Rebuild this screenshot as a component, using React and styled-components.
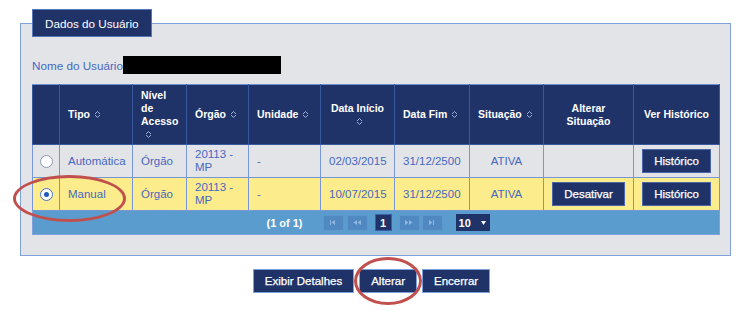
import React from "react";
import styled, { createGlobalStyle } from "styled-components";

const GlobalStyle = createGlobalStyle`
  body {
    margin: 0;
    background: #fff;
    font-family: "Liberation Sans", Arial, sans-serif;
  }
`;

const Page = styled.div`
  position: relative;
  width: 753px;
  height: 311px;
  padding: 9px 0 0 20px;
  box-sizing: border-box;
`;

const Fieldset = styled.fieldset`
  width: 711px;
  box-sizing: border-box;
  margin: 0;
  padding: 19px 11px 20px 11px;
  border: 1px solid #7ea1dc;
  background: #e3e4e8;
  min-inline-size: 0;
`;

const Legend = styled.legend`
  padding: 0 12px;
  height: 28px;
  line-height: 28px;
  box-sizing: border-box;
  background: #1f3368;
  border: 1px solid #5676b8;
  color: #fff;
  font-size: 11.7px;
`;

const NameRow = styled.div`
  display: flex;
  align-items: center;
  height: 18px;
  margin-bottom: 10px;
  color: #4668c0;
  font-size: 11.7px;
`;

const Redacted = styled.span`
  display: inline-block;
  width: 158px;
  height: 18px;
  background: #000;
`;

const Table = styled.table`
  width: 687px;
  table-layout: fixed;
  border-collapse: collapse;
`;

const Th = styled.th`
  height: 59px;
  padding: 0 4px 0 ${(p) => (p.$center ? "4px" : "8px")};
  background: #1f3368;
  border: 1px solid #3a5aa0;
  border-top-color: #6f90d0;
  color: #fff;
  font-size: 10.5px;
  font-weight: bold;
  line-height: 13px;
  text-align: ${(p) => (p.$center ? "center" : "left")};
  vertical-align: middle;
`;

const Row = styled.tr`
  background: ${(p) => (p.$selected ? "#fcec8c" : "#e3e4e8")};
`;

const Td = styled.td`
  height: 32px;
  padding: 0 4px 0 8px;
  border: 1px solid #7896d4;
  color: #4668c0;
  font-size: 11.5px;
  line-height: 13px;
  text-align: ${(p) => (p.$center ? "center" : "left")};
  vertical-align: middle;
  ${(p) => p.$center && "padding: 0 4px;"}
`;

const Radio = styled.span`
  display: block;
  width: 13px;
  height: 13px;
  margin: 0 auto;
  box-sizing: border-box;
  border-radius: 50%;
  background: #fff;
  border: 1px solid ${(p) => (p.$checked ? "#4a72c4" : "#8b98b0")};
  position: relative;
  &::after {
    content: "";
    display: ${(p) => (p.$checked ? "block" : "none")};
    position: absolute;
    left: 3px;
    top: 3px;
    width: 5px;
    height: 5px;
    border-radius: 50%;
    background: #1f58b8;
  }
`;

const Button = styled.button`
  height: 24px;
  padding: 0 11px;
  background: #1f3368;
  border: 1px solid ${(p) => (p.$light ? "#7ea1dc" : "#4a66a8")};
  color: #fff;
  font-family: "Liberation Sans", Arial, sans-serif;
  font-size: 11.5px;
  font-weight: normal;
  -webkit-text-stroke: 0.25px #fff;
  cursor: pointer;
`;

const PagerCell = styled.td`
  height: 23px;
  padding: 0;
  background: #5b9cce;
  border: 1px solid #7ea1dc;
`;

const Pager = styled.div`
  display: flex;
  align-items: center;
  justify-content: center;
  padding-left: 4px;
`;

const PagerText = styled.span`
  color: #fff;
  font-size: 11px;
  font-weight: bold;
  margin-right: 20px;
`;

const PageLink = styled.span`
  display: inline-flex;
  align-items: center;
  justify-content: center;
  width: 21px;
  height: 16px;
  margin-right: ${(p) => p.$gap || 0}px;
  background: #5089c2;
  border: 1px solid #5d97cc;
  box-sizing: border-box;
`;

const PageNumber = styled.span`
  display: inline-flex;
  align-items: center;
  justify-content: center;
  width: 17px;
  height: 17px;
  margin-right: 7px;
  background: #1f3368;
  border: 1px solid #3c5ea8;
  box-sizing: border-box;
  color: #fff;
  font-size: 11px;
  font-weight: bold;
`;

const RowsSelect = styled.span`
  display: inline-flex;
  align-items: center;
  justify-content: space-between;
  width: 34px;
  height: 17px;
  margin-left: 13px;
  padding: 0 4px 0 3px;
  box-sizing: border-box;
  background: #1f3368;
  color: #fff;
  font-size: 11px;
  font-weight: bold;
`;

const ButtonBar = styled.div`
  display: flex;
  justify-content: center;
  gap: 5px;
  width: 711px;
  margin-top: 13px;
  padding-right: 8px;
  box-sizing: border-box;
`;

const Circle = styled.div`
  position: absolute;
  left: ${(p) => p.$x}px;
  top: ${(p) => p.$y}px;
  width: ${(p) => p.$w}px;
  height: ${(p) => p.$h}px;
  box-sizing: border-box;
  border: 3px solid #c0504d;
  border-radius: 50%;
  pointer-events: none;
`;

const SortIcon = () => (
  <svg width="7" height="9" viewBox="0 0 7 9" style={{ marginLeft: 4, verticalAlign: "-1px" }}>
    <path d="M1 4 L3.5 1.5 L6 4 M1 5 L3.5 7.5 L6 5" fill="none" stroke="#9fb1d8" strokeWidth="1" />
  </svg>
);

const PagerIcon = ({ kind }) => {
  const c = "#8fb6df";
  const shapes = {
    first: "M2 2h1v5H2z M7 2v5L3.5 4.5z",
    prev: "M5 2v5L1.5 4.5z M9 2v5L5.5 4.5z",
    next: "M1 2v5l3.5-2.5z M5 2v5l3.5-2.5z",
    last: "M2 2v5l3.5-2.5z M6 2h1v5H6z",
  };
  return (
    <svg width="10" height="9" viewBox="0 0 10 9">
      <path d={shapes[kind]} fill={c} />
    </svg>
  );
};

const users = [
  { tipo: "Automática", nivel: "Órgão", orgao: "20113 - MP", unidade: "-", inicio: "02/03/2015", fim: "31/12/2500", situacao: "ATIVA", selected: false },
  { tipo: "Manual", nivel: "Órgão", orgao: "20113 - MP", unidade: "-", inicio: "10/07/2015", fim: "31/12/2500", situacao: "ATIVA", selected: true },
];

const widths = [27, 73, 54, 62, 72, 74, 75, 74, 90, 86];

export default function App() {
  return (
    <>
      <GlobalStyle />
      <Page>
        <Fieldset>
          <Legend>Dados do Usuário</Legend>
          <NameRow>
            Nome do Usuário
            <Redacted />
          </NameRow>
          <Table>
            <colgroup>
              {widths.map((w, i) => (
                <col key={i} style={{ width: w }} />
              ))}
            </colgroup>
            <thead>
              <tr>
                <Th />
                <Th>Tipo<SortIcon /></Th>
                <Th>Nível<br />de<br />Acesso<br /><SortIcon /></Th>
                <Th>Órgão<SortIcon /></Th>
                <Th>Unidade<SortIcon /></Th>
                <Th $center>Data Início<br /><SortIcon /></Th>
                <Th>Data Fim<SortIcon /></Th>
                <Th>Situação<SortIcon /></Th>
                <Th $center>Alterar<br />Situação</Th>
                <Th $center>Ver Histórico</Th>
              </tr>
            </thead>
            <tbody>
              {users.map((u, i) => (
                <Row key={i} $selected={u.selected}>
                  <Td $center><Radio $checked={u.selected} /></Td>
                  <Td>{u.tipo}</Td>
                  <Td>{u.nivel}</Td>
                  <Td>{u.orgao}</Td>
                  <Td>{u.unidade}</Td>
                  <Td>{u.inicio}</Td>
                  <Td>{u.fim}</Td>
                  <Td $center>{u.situacao}</Td>
                  <Td $center>{u.selected && <Button>Desativar</Button>}</Td>
                  <Td $center><Button>Histórico</Button></Td>
                </Row>
              ))}
            </tbody>
            <tfoot>
              <tr>
                <PagerCell colSpan={10}>
                  <Pager>
                    <PagerText>(1 of 1)</PagerText>
                    <PageLink $gap={3}><PagerIcon kind="first" /></PageLink>
                    <PageLink $gap={7}><PagerIcon kind="prev" /></PageLink>
                    <PageNumber>1</PageNumber>
                    <PageLink $gap={2}><PagerIcon kind="next" /></PageLink>
                    <PageLink><PagerIcon kind="last" /></PageLink>
                    <RowsSelect>
                      10
                      <svg width="5" height="4" viewBox="0 0 5 4">
                        <path d="M0 0h5L2.5 4z" fill="#fff" />
                      </svg>
                    </RowsSelect>
                  </Pager>
                </PagerCell>
              </tr>
            </tfoot>
          </Table>
        </Fieldset>
        <ButtonBar>
          <Button $light>Exibir Detalhes</Button>
          <Button $light>Alterar</Button>
          <Button $light>Encerrar</Button>
        </ButtonBar>
        <Circle $x={13} $y={175} $w={113} $h={47} />
        <Circle $x={354} $y={257} $w={68} $h={48} />
      </Page>
    </>
  );
}
